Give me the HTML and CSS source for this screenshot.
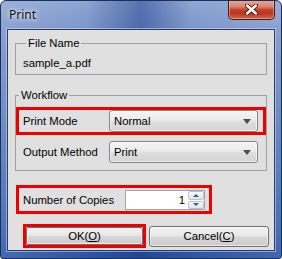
FILE: index.html
```html
<!DOCTYPE html>
<html lang="en">
<head>
    <meta charset="UTF-8">
    <title>Print</title>
    <link rel="stylesheet" href="styles.css">
</head>
<body>
    <div class="window">
        <div class="titlebar">
            <span class="title">Print</span>
            <button class="close" aria-label="Close">
                <svg width="13" height="11" viewBox="0 0 13 11">
                    <path d="M2 1.5 L11 9.5 M11 1.5 L2 9.5" stroke="#3a1208" stroke-width="4.2" stroke-linecap="round"/>
                    <path d="M2 1.5 L11 9.5 M11 1.5 L2 9.5" stroke="#ffffff" stroke-width="2.4" stroke-linecap="round"/>
                </svg>
            </button>
        </div>

        <div class="client">
            <fieldset class="group group-file">
                <legend>File Name</legend>
                <div class="file-name">sample_a.pdf</div>
            </fieldset>

            <fieldset class="group group-workflow">
                <legend>Workflow</legend>
                <div class="row marked">
                    <span class="label">Print Mode</span>
                    <div class="select"><span>Normal</span><span class="arrow"></span></div>
                </div>
                <div class="row">
                    <span class="label">Output Method</span>
                    <div class="select"><span>Print</span><span class="arrow"></span></div>
                </div>
            </fieldset>

            <div class="row row-copies marked">
                <span class="label">Number of Copies</span>
                <div class="spin">
                    <span class="spin-value">1</span>
                    <div class="spin-buttons">
                        <span class="spin-btn"><span class="tri-up"></span></span>
                        <span class="spin-btn"><span class="tri-down"></span></span>
                    </div>
                </div>
            </div>

            <div class="buttons">
                <div class="marked-btn">
                    <button class="btn btn-ok">OK(<u>O</u>)</button>
                </div>
                <button class="btn btn-cancel">Cancel(<u>C</u>)</button>
            </div>
        </div>
    </div>
</body>
</html>
```

FILE: styles.css
```css
body {
    margin: 0;
    background: #ffffff;
    font-family: "Liberation Sans", Arial, sans-serif;
    font-size: 11.3px;
    color: #000;
}

.window {
    width: 282px;
    height: 259px;
    box-sizing: border-box;
    border: 1px solid #1c2f57;
    border-radius: 6px 6px 3px 3px;
    display: flex;
    flex-direction: column;
    overflow: hidden;
    background:
        linear-gradient(to right, rgba(255,255,255,0.12) 0%, rgba(255,255,255,0) 30%, rgba(20,50,130,0.45) 50%, rgba(255,255,255,0) 68%, rgba(255,255,255,0.1) 100%),
        linear-gradient(to bottom, #8ea6d3 0%, #7791c8 15%, #5378bd 55%, #2a55a8 100%);
}

/* title bar */
.titlebar {
    height: 28px;
    flex: none;
    display: flex;
    align-items: flex-start;
    justify-content: space-between;
}

.title {
    margin: 6px 0 0 8px;
    font-family: "Noto Sans", "Open Sans", sans-serif;
    font-size: 12px;
    line-height: 16px;
    color: #111;
    text-shadow: 0 0 6px rgba(255,255,255,0.9), 0 0 3px rgba(255,255,255,0.7);
}

.close {
    width: 47px;
    height: 20px;
    margin: -1px 6px 0 0;
    padding: 0;
    border: 1px solid #4a1a12;
    border-top: none;
    border-radius: 0 0 5px 5px;
    display: flex;
    align-items: center;
    justify-content: center;
    background: linear-gradient(to bottom, #e9ab9c 0%, #d98571 35%, #c2402a 52%, #b93520 70%, #d2664c 100%);
    box-shadow: inset 0 0 0 1px rgba(255,210,200,0.45);
}

/* client area */
.client {
    flex: 1;
    margin: 0 6px 7px 6px;
    padding: 6px 7px 0 7px;
    border: 1px solid #2b3c60;
    background: #e0e0e0;
    box-shadow: 0 0 0 1px rgba(220,232,250,0.5);
    display: flex;
    flex-direction: column;
}

.group {
    margin: 0;
    min-width: 0;
    border: 1px solid #a0a0a0;
}

.group legend {
    margin-left: 3px;
    padding: 0 2px;
    line-height: 14px;
}

.group-file {
    padding: 6px 7px 4px 7px;
}

.file-name {
    line-height: 14px;
}

.group-workflow {
    margin-top: 13px;
    padding: 5px 0 4px 0;
    display: flex;
    flex-direction: column;
    gap: 3px;
}

/* label + control rows */
.row {
    display: flex;
    align-items: center;
    border: 3px solid transparent;
    padding: 0 5px 0 4px;
}

.row.marked {
    border-color: #ee0000;
}

.label {
    width: 86px;
    flex: none;
    white-space: nowrap;
}

.select {
    flex: 1;
    height: 22px;
    box-sizing: border-box;
    border: 1px solid #858585;
    border-radius: 3px;
    padding: 0 6px 0 4px;
    display: flex;
    align-items: center;
    justify-content: space-between;
    background: linear-gradient(to bottom, #f4f4f4 0%, #ebebeb 45%, #dddddd 55%, #d5d5d5 100%);
    box-shadow: inset 0 0 0 1px rgba(255,255,255,0.6);
}

.arrow {
    width: 0;
    height: 0;
    border-left: 4px solid transparent;
    border-right: 4px solid transparent;
    border-top: 5px solid #4d4d4d;
}

.row-copies {
    width: 196px;
    box-sizing: border-box;
    margin: 14px 0 0 1px;
    padding: 2px 4px 1px 4px;
}

.row-copies .label {
    width: 102px;
}

.spin {
    flex: 1;
    height: 20px;
    box-sizing: border-box;
    border: 1px solid #a3a3a3;
    background: #fff;
    display: flex;
}

.spin-value {
    flex: 1;
    text-align: right;
    padding-right: 3px;
    line-height: 18px;
}

.spin-buttons {
    width: 16px;
    display: flex;
    flex-direction: column;
    gap: 1px;
}

.spin-btn {
    flex: 1;
    display: flex;
    align-items: center;
    justify-content: center;
    border: 1px solid #b9c3d0;
    border-radius: 2px;
    background: linear-gradient(to bottom, #f6f8fb, #dfe5ec);
}

.tri-up,
.tri-down {
    width: 0;
    height: 0;
    border-left: 3px solid transparent;
    border-right: 3px solid transparent;
}

.tri-up {
    border-bottom: 3px solid #3d5a80;
}

.tri-down {
    border-top: 3px solid #3d5a80;
}

/* buttons */
.buttons {
    margin: 10px -2px 0 8px;
    display: flex;
    align-items: center;
    gap: 3px;
}

.marked-btn {
    width: 123px;
    height: 24px;
    box-sizing: border-box;
    border: 3px solid #ee0000;
    display: flex;
}

.btn {
    font-family: inherit;
    font-size: 11.3px;
    color: #000;
    padding: 0;
    border: 1px solid #707070;
    border-radius: 3px;
    background: linear-gradient(to bottom, #f2f2f2 0%, #e8e8e8 45%, #d6d6d6 55%, #cbcbcb 100%);
    box-shadow: inset 0 0 0 1px rgba(255,255,255,0.55);
}

.btn-ok {
    flex: 1;
    border-radius: 2px;
}

.btn-cancel {
    width: 120px;
    height: 21px;
}
```
